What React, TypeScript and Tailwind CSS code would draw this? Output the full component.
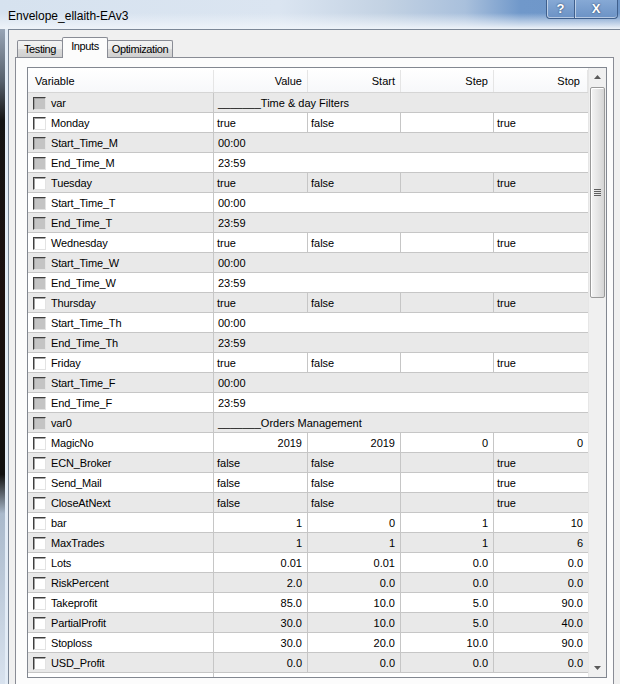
type Row = {
  name: string;
  locked?: boolean;
  span?: string;
  cells?: [string, string, string, string];
  right?: boolean;
};

const days: [string, string][] = [
  ["Monday", "M"],
  ["Tuesday", "T"],
  ["Wednesday", "W"],
  ["Thursday", "Th"],
  ["Friday", "F"],
];

const rows: Row[] = [
  { name: "var", locked: true, span: "_______Time & day Filters" },
  ...days.flatMap(([day, s]): Row[] => [
    { name: day, cells: ["true", "false", "", "true"] },
    { name: `Start_Time_${s}`, locked: true, span: "00:00" },
    { name: `End_Time_${s}`, locked: true, span: "23:59" },
  ]),
  { name: "var0", locked: true, span: "_______Orders Management" },
  { name: "MagicNo", cells: ["2019", "2019", "0", "0"], right: true },
  { name: "ECN_Broker", cells: ["false", "false", "", "true"] },
  { name: "Send_Mail", cells: ["false", "false", "", "true"] },
  { name: "CloseAtNext", cells: ["false", "false", "", "true"] },
  { name: "bar", cells: ["1", "0", "1", "10"], right: true },
  { name: "MaxTrades", cells: ["1", "1", "1", "6"], right: true },
  { name: "Lots", cells: ["0.01", "0.01", "0.0", "0.0"], right: true },
  { name: "RiskPercent", cells: ["2.0", "0.0", "0.0", "0.0"], right: true },
  { name: "Takeprofit", cells: ["85.0", "10.0", "5.0", "90.0"], right: true },
  { name: "PartialProfit", cells: ["30.0", "10.0", "5.0", "40.0"], right: true },
  { name: "Stoploss", cells: ["30.0", "20.0", "10.0", "90.0"], right: true },
  { name: "USD_Profit", cells: ["0.0", "0.0", "0.0", "0.0"], right: true },
  { name: "", locked: true, span: "" },
];

const colW = ["w-[94px] border-r", "w-[93px] border-r", "w-[93px] border-r", "w-[94px]"];

function Check({ locked }: { locked?: boolean }) {
  return (
    <span
      className={`-mt-px h-[13px] w-[13px] shrink-0 border border-t-[#3f3f3f] border-l-[#3f3f3f] border-b-[#e3e3e3] border-r-[#e3e3e3] shadow-[inset_1px_1px_0_#a0a0a0] ${
        locked ? "bg-[#c4c4c4]" : "bg-white"
      }`}
    />
  );
}

function GridRow({ row, index }: { row: Row; index: number }) {
  const bg = index % 2 === 0 ? "bg-[#e9e9e9]" : "bg-white";
  return (
    <div className={`flex h-[20px] shrink-0 border-b border-[#c6c6c6] pt-[2px] ${bg}`}>
      <div className="-mt-[2px] flex w-[186px] items-center border-r border-[#c6c6c6] pl-[5px] pt-[2px]">
        <Check locked={row.locked} />
        <span className="ml-[5px] tracking-[-0.15px]">{row.name}</span>
      </div>
      {row.span !== undefined ? (
        <div className="flex flex-1 items-center pl-[4px]">{row.span}</div>
      ) : (
        row.cells!.map((c, i) => (
          <div
            key={i}
            className={`-mt-[2px] flex items-center border-[#c6c6c6] pt-[2px] ${colW[i]} ${
              row.right ? "justify-end pr-[5px]" : "pl-[3px]"
            }`}
          >
            {c}
          </div>
        ))
      )}
    </div>
  );
}

function ScrollBar() {
  return (
    <div className="flex w-[18px] flex-col border-l border-[#e6e6e6] bg-[#f0f0f0]">
      <div className="flex h-[18px] items-center justify-center">
        <svg width="7" height="4" viewBox="0 0 7 4">
          <path d="M0 4 L3.5 0 L7 4 Z" fill="#5a5a5a" />
        </svg>
      </div>
      <div className="ml-px mt-px flex h-[211px] w-[15px] items-center justify-center rounded-[2px] border border-[#9a9a9a] bg-[linear-gradient(to_right,#f4f4f4,#e6e6e6_50%,#d5d5d5)] shadow-[inset_1px_1px_0_#fff]">
        <svg width="7" height="7" viewBox="0 0 7 7">
          <path d="M0 0.5 H7 M0 2.5 H7 M0 4.5 H7 M0 6.5 H7" stroke="#5f5f5f" strokeWidth="1" />
        </svg>
      </div>
      <div className="flex-1" />
      <div className="flex h-[18px] items-center justify-center">
        <svg width="7" height="4" viewBox="0 0 7 4">
          <path d="M0 0 L7 0 L3.5 4 Z" fill="#5a5a5a" />
        </svg>
      </div>
    </div>
  );
}

function Tab({ label, active, w }: { label: string; active?: boolean; w: string }) {
  return (
    <div
      className={`-ml-px flex items-center justify-center rounded-t-[2px] border border-b-0 border-[#898c95] tracking-[-0.4px] ${w} ${
        active
          ? "relative z-10 -mb-px h-[21px] bg-[#fcfcfc] pb-[3px]"
          : "h-[17px] bg-[linear-gradient(to_bottom,#f2f2f2,#ebebeb_50%,#dcdcdc_51%,#cfcfcf)] pt-px"
      }`}
    >
      {label}
    </div>
  );
}

export default function App() {
  return (
    <div className="relative h-[684px] w-[620px] overflow-hidden bg-[#dbe6f2] font-['Liberation_Sans',Arial,sans-serif] text-[11px] text-black">
      <div className="flex h-[29px] bg-[linear-gradient(to_bottom,rgba(255,255,255,0)_45%,#eef3f9_100%),linear-gradient(to_right,#d6e2ef_0%,#dbe5f1_45%,#c3d2e3_62%,#a9c0dc_75%,#7098ca_84%,#6d95c8_100%)]">
        <span className="self-center pl-[8px] pt-[3px] text-[12px]">Envelope_ellaith-EAv3</span>
        <div className="ml-auto mr-[2px] flex self-start">
          <div className="flex h-[19px] w-[29px] items-center justify-center rounded-bl-[4px] border border-t-0 border-[#3f5f8c] bg-[linear-gradient(to_bottom,#86a9d5,#6b92c5)] text-[13px] font-bold text-white shadow-[inset_1px_0_0_rgba(255,255,255,0.5),inset_0_-1px_0_rgba(255,255,255,0.5)] [text-shadow:0_0_2px_#1d3556]">
            ?
          </div>
          <div className="-ml-px flex h-[19px] w-[44px] items-center justify-center rounded-br-[4px] border border-t-0 border-[#3f5f8c] bg-[linear-gradient(to_bottom,#86a9d5,#6b92c5)] text-[13px] font-bold text-white shadow-[inset_1px_0_0_rgba(255,255,255,0.5),inset_0_-1px_0_rgba(255,255,255,0.5)] [text-shadow:0_0_2px_#1d3556]">
            X
          </div>
        </div>
      </div>
      <div className="flex h-[655px]">
        <div className="w-[5px] bg-[linear-gradient(to_bottom,#98a5b6_0%,#56606c_8%,#141414_14%,#1c1010_40%,#101010_68%,#a9b9cb_74%,#d8e2ee_100%)]" />
        <div className="w-[3px] bg-[#e3ecf6]" />
        <div className="flex flex-1 flex-col border-l border-t border-[#7b8797] bg-[#f0f0f0] px-[6px] pt-[7px]">
          <div className="flex h-[20px] items-end pl-[3px]">
            <Tab label="Testing" w="w-[46px]" />
            <Tab label="Inputs" active w="w-[46px]" />
            <Tab label="Optimization" w="w-[66px]" />
          </div>
          <div className="h-[700px] shrink-0 border border-[#898c95] bg-[#fcfcfc] pl-[11px] pt-[9px]">
            <div className="flex h-[611px] w-[580px] overflow-hidden border border-[#828790] bg-white">
              <div className="flex w-[560px] flex-col overflow-hidden">
                <div className="flex h-[25px] shrink-0 border-b border-[#d5d5d5] bg-[linear-gradient(to_bottom,#ffffff,#f7f8fa)] pt-[2px]">
                  <div className="flex w-[186px] items-center border-r border-[#e5e5e5] pl-[7px]">Variable</div>
                  <div className="flex w-[94px] items-center justify-end border-r border-[#e5e5e5] pr-[5px]">Value</div>
                  <div className="flex w-[93px] items-center justify-end border-r border-[#e5e5e5] pr-[5px]">Start</div>
                  <div className="flex w-[93px] items-center justify-end border-r border-[#e5e5e5] pr-[5px]">Step</div>
                  <div className="flex w-[94px] items-center justify-end border-r border-[#e5e5e5] pr-[7px]">Stop</div>
                </div>
                {rows.map((r, i) => (
                  <GridRow key={i} row={r} index={i} />
                ))}
              </div>
              <ScrollBar />
            </div>
          </div>
        </div>
      </div>
    </div>
  );
}
